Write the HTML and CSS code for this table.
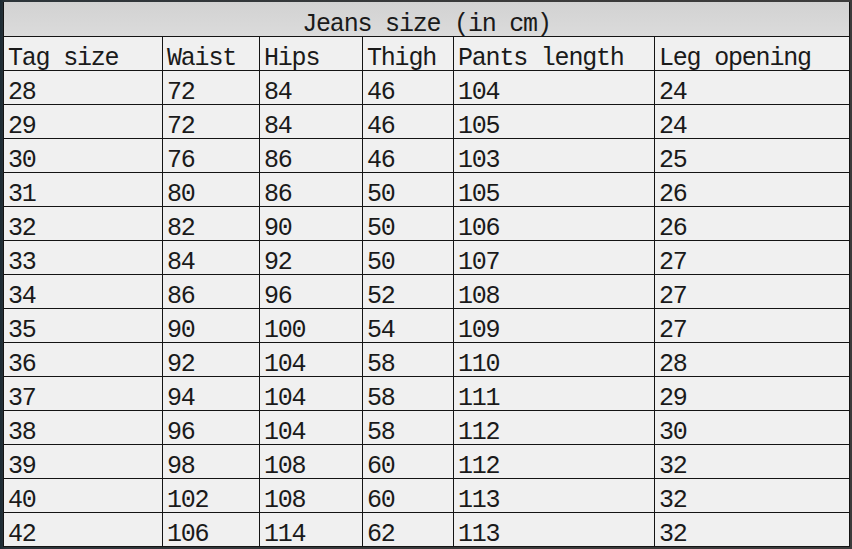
FILE: index.html
```html
<!DOCTYPE html>
<html>
<head>
<meta charset="utf-8">
<link rel="stylesheet" href="styles.css">
</head>
<body>
<div class="sheet">
  <div class="cell title">Jeans size (in cm)</div>
  <div class="cell">Tag size</div><div class="cell">Waist</div><div class="cell">Hips</div><div class="cell">Thigh</div><div class="cell">Pants length</div><div class="cell">Leg opening</div>
  <div class="cell">28</div><div class="cell">72</div><div class="cell">84</div><div class="cell">46</div><div class="cell">104</div><div class="cell">24</div>
  <div class="cell">29</div><div class="cell">72</div><div class="cell">84</div><div class="cell">46</div><div class="cell">105</div><div class="cell">24</div>
  <div class="cell">30</div><div class="cell">76</div><div class="cell">86</div><div class="cell">46</div><div class="cell">103</div><div class="cell">25</div>
  <div class="cell">31</div><div class="cell">80</div><div class="cell">86</div><div class="cell">50</div><div class="cell">105</div><div class="cell">26</div>
  <div class="cell">32</div><div class="cell">82</div><div class="cell">90</div><div class="cell">50</div><div class="cell">106</div><div class="cell">26</div>
  <div class="cell">33</div><div class="cell">84</div><div class="cell">92</div><div class="cell">50</div><div class="cell">107</div><div class="cell">27</div>
  <div class="cell">34</div><div class="cell">86</div><div class="cell">96</div><div class="cell">52</div><div class="cell">108</div><div class="cell">27</div>
  <div class="cell">35</div><div class="cell">90</div><div class="cell">100</div><div class="cell">54</div><div class="cell">109</div><div class="cell">27</div>
  <div class="cell">36</div><div class="cell">92</div><div class="cell">104</div><div class="cell">58</div><div class="cell">110</div><div class="cell">28</div>
  <div class="cell">37</div><div class="cell">94</div><div class="cell">104</div><div class="cell">58</div><div class="cell">111</div><div class="cell">29</div>
  <div class="cell">38</div><div class="cell">96</div><div class="cell">104</div><div class="cell">58</div><div class="cell">112</div><div class="cell">30</div>
  <div class="cell">39</div><div class="cell">98</div><div class="cell">108</div><div class="cell">60</div><div class="cell">112</div><div class="cell">32</div>
  <div class="cell">40</div><div class="cell">102</div><div class="cell">108</div><div class="cell">60</div><div class="cell">113</div><div class="cell">32</div>
  <div class="cell">42</div><div class="cell">106</div><div class="cell">114</div><div class="cell">62</div><div class="cell">113</div><div class="cell">32</div>
</div>
</body>
</html>
```
FILE: styles.css
```css
html, body {
  margin: 0;
  padding: 0;
  width: 852px;
  height: 549px;
  overflow: hidden;
  background: linear-gradient(90deg, #1b2a33 0, #2c3439 6px, #3a3a3a 60%, #3c3c3c 100%);
}

.sheet {
  margin: 2px 0 0 3px;
  width: 845px;
  display: grid;
  grid-template-columns: 158px 96px 102px 90px 200px 194px;
  grid-template-rows: 34px repeat(15, 33px);
  gap: 1px;
  background: #141414;
  border-left: 1px solid #141414;
  border-right: 1px solid #141414;
  border-bottom: 1px solid #141414;
  font-family: "Liberation Mono", "DejaVu Sans Mono", monospace;
  font-size: 25px;
  letter-spacing: -1.2px;
  color: #1a1a1a;
}

.cell {
  background: #f0f0f0;
  display: flex;
  align-items: flex-end;
  padding: 0 0 0 4px;
  line-height: 22px;
  white-space: nowrap;
}

.title {
  grid-column: 1 / -1;
  justify-content: center;
  padding: 0;
  background: linear-gradient(180deg, #d2d2d2 0, #dbdbdb 100%);
}
```
